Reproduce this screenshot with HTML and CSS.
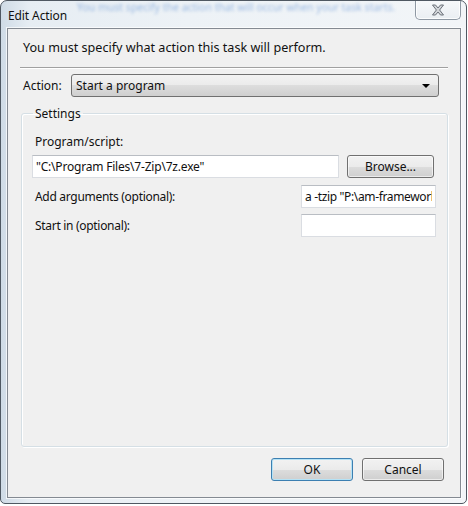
FILE: index.html
```html
<!DOCTYPE html>
<html lang="en">
  <head>
    <meta charset="UTF-8" />
    <title>Edit Action</title>
    <link rel="stylesheet" href="styles.css">
  </head>
  <body>
    <div class="window">
      <!-- blurred text of the window behind the glass -->
      <div class="behind">You must specify the action that will occur when your task starts.</div>

      <div class="titlebar">
        <span class="title">Edit Action</span>
        <button class="close-btn" title="Close">
          <svg width="14" height="12" viewBox="0 0 14 12">
            <path d="M1.5 1 L4.5 1 L7 4 L9.5 1 L12.5 1 L8.6 6 L12.5 11 L9.5 11 L7 8 L4.5 11 L1.5 11 L5.4 6 Z"
                  fill="#d3d6da" stroke="#6a7079" stroke-width="1" stroke-linejoin="round" />
          </svg>
        </button>
      </div>

      <div class="client">
        <p class="intro">You must specify what action this task will perform.</p>
        <div class="separator"></div>

        <div class="action-row">
          <label>Action:</label>
          <div class="select">
            <span>Start a program</span>
            <span class="arrow"></span>
          </div>
        </div>

        <fieldset class="settings">
          <legend>Settings</legend>

          <div class="field-label">Program/script:</div>
          <div class="program-row">
            <input class="program-input" type="text" value="&quot;C:\Program Files\7-Zip\7z.exe&quot;" title="Program/script" />
            <button class="btn browse-btn">Browse...</button>
          </div>

          <div class="option-row">
            <span class="option-label">Add arguments (optional):</span>
            <input class="option-input" type="text" value="a -tzip &quot;P:\am-framework\" title="Add arguments" />
          </div>

          <div class="option-row">
            <span class="option-label">Start in (optional):</span>
            <input class="option-input" type="text" value="" title="Start in" />
          </div>
        </fieldset>

        <div class="buttons">
          <button class="btn default-btn">OK</button>
          <button class="btn">Cancel</button>
        </div>
      </div>
    </div>
  </body>
</html>
```

FILE: styles.css
```css
body {
  margin: 0;
  background-color: #ffffff;
  font-family: "Noto Sans", "Open Sans", sans-serif;
  font-size: 12px;
  color: #111;
}

.window {
  position: relative;
  width: 467px;
  height: 504px;
  box-sizing: border-box;
  border: 1px solid #4f5862;
  border-radius: 7px 7px 5px 5px;
  padding: 0 5px 5px 6px;
  display: flex;
  flex-direction: column;
  overflow: hidden;
  background: linear-gradient(90deg, #cfdbe6 0%, #e6edf3 6%, #edf2f6 40%, #f2f5f8 100%);
}

/* window behind the glass frame, blurred */
.behind {
  position: absolute;
  top: 0;
  left: 76px;
  font-size: 10.5px;
  line-height: 12px;
  color: #4a82cf;
  filter: blur(1.4px);
  opacity: 0.5;
  white-space: nowrap;
}

.titlebar {
  position: relative;
  height: 27px;
  display: flex;
  justify-content: space-between;
  align-items: flex-start;
}

.title {
  margin-top: 6px;
  padding-left: 1px;
  font-size: 12px;
  letter-spacing: -0.1px;
}

.close-btn {
  width: 46px;
  height: 20px;
  margin-top: -1px;
  padding: 0;
  border: 1px solid #8e98a3;
  border-top: none;
  border-radius: 0 0 5px 5px;
  background: linear-gradient(#f7f9fb, #eaeef2);
  box-shadow: inset 0 0 0 1px rgba(255, 255, 255, 0.8);
  display: flex;
  align-items: center;
  justify-content: center;
}

.client {
  flex: 1;
  background-color: #f0f0f0;
  border: 1px solid #848a92;
  box-shadow: 0 0 0 1px rgba(255, 255, 255, 0.7);
  padding: 0 12px 16px 12px;
  display: flex;
  flex-direction: column;
}

.intro {
  margin: 11px 0 0 3px;
  line-height: 15px;
  font-size: 12.6px;
}

.separator {
  height: 1px;
  margin-top: 12px;
  background-color: #a0a0a0;
  border-bottom: 1px solid #ffffff;
}

.action-row {
  display: flex;
  align-items: center;
  margin-top: 5px;
  padding-left: 3px;
}

.action-row label {
  width: 48px;
}

.select {
  width: 368px;
  height: 23px;
  box-sizing: border-box;
  border: 1px solid #707070;
  border-radius: 3px;
  background: linear-gradient(#f2f2f2 0%, #ebebeb 50%, #dddddd 50%, #cfcfcf 100%);
  display: flex;
  align-items: center;
  justify-content: space-between;
  padding: 0 8px 0 4px;
}

.arrow {
  width: 0;
  height: 0;
  border-left: 4px solid transparent;
  border-right: 4px solid transparent;
  border-top: 4px solid #000;
}

/* Settings group box */
.settings {
  flex: 1;
  margin: 9px 0 0 1px;
  padding: 0 12px 0 10px;
  border: 1px solid #d5dfe5;
  border-radius: 3px;
  box-shadow: inset 1px 1px 0 #ffffff, 1px 1px 0 #ffffff;
  min-width: 0;
}

.settings legend {
  padding: 0 2px;
  margin-left: 1px;
  line-height: 15px;
}

.field-label {
  margin: 13px 0 0 3px;
  line-height: 15px;
}

.program-row {
  display: flex;
  margin-top: 6px;
}

input {
  height: 23px;
  box-sizing: border-box;
  border: 1px solid #dadde2;
  border-top-color: #b9bdc3;
  background-color: #fff;
  font-family: inherit;
  font-size: 12px;
  letter-spacing: -0.2px;
  padding: 0 3px;
  color: #111;
}

.program-input {
  width: 307px;
}

.option-row {
  display: flex;
  align-items: center;
  justify-content: space-between;
  margin-top: 7px;
}

.option-row + .option-row {
  margin-top: 6px;
}

.option-label {
  margin-left: 3px;
  letter-spacing: -0.3px;
}

.option-input {
  width: 135px;
  margin-right: -1px;
  letter-spacing: -0.35px;
}

.btn {
  height: 23px;
  box-sizing: border-box;
  border: 1px solid #707070;
  border-radius: 3px;
  background: linear-gradient(#f2f2f2 0%, #ebebeb 50%, #dddddd 50%, #cfcfcf 100%);
  box-shadow: inset 0 0 0 1px rgba(255, 255, 255, 0.6);
  font-family: inherit;
  font-size: 12px;
  color: #111;
  width: 82px;
  padding: 0;
}

.browse-btn {
  width: 87px;
  margin-left: 8px;
}

.buttons {
  display: flex;
  justify-content: flex-end;
  gap: 9px;
  margin-top: 11px;
  padding-right: 4px;
}

.default-btn {
  border-color: #3c7fb1;
  box-shadow: inset 0 0 0 1px #b5e2f5;
}
```
